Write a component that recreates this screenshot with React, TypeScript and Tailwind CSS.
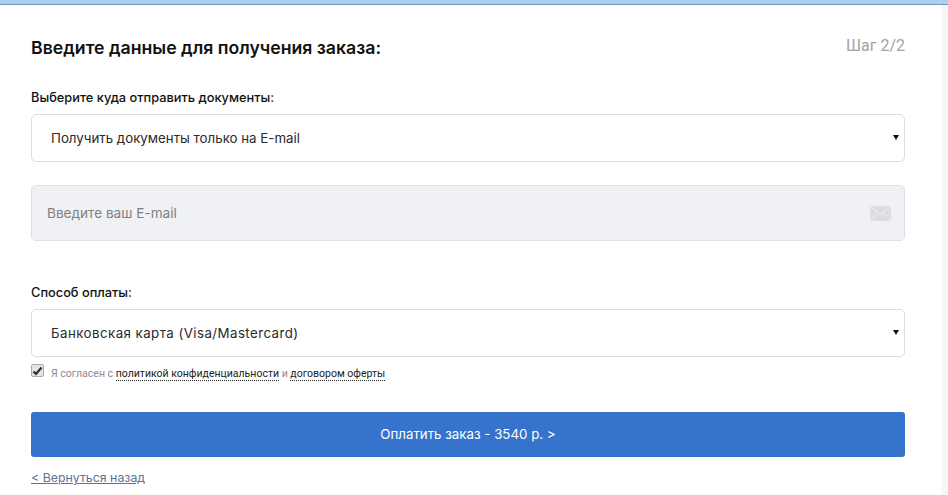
const font = "font-['Inter','Noto_Sans',sans-serif]";

function SelectBox({ label, tracking }: { label: string; tracking?: string }) {
  return (
    <div className="h-[48px] flex items-center justify-between pl-[19px] pr-[5px] bg-white border border-[#dcdcdc] rounded-[5px]">
      <span className={`pt-[1px] text-[13.3px] text-[#2a2a2a] ${tracking ?? ""}`}>{label}</span>
      <svg width="6" height="5" viewBox="0 0 6 5" className="mt-[-1px]">
        <path d="M0 0H6L3 5Z" fill="#111111" />
      </svg>
    </div>
  );
}

export default function App() {
  return (
    <div className={`${font} w-[948px] h-[495px] overflow-hidden bg-white flex flex-col`}>
      <div className="h-[5px] shrink-0 bg-[#a9cff3] border-b border-[#7d96ad]" />
      <div className="flex flex-1 min-h-0">
        <div className="flex-1 pl-[31px] pr-[37px]">
          <div className="flex items-start justify-between pt-[31px]">
            <h1 className="text-[17.7px] leading-[24px] font-semibold text-[#111111]">
              Введите данные для получения заказа:
            </h1>
            <span className="text-[16px] leading-[20px] text-[#a3a3a3] font-['Roboto',sans-serif]">Шаг 2/2</span>
          </div>

          <div className="mt-[29px] mb-[7px] text-[12.8px] leading-[18px] font-medium text-[#111111]">
            Выберите куда отправить документы:
          </div>
          <SelectBox label="Получить документы только на E-mail" />

          <div className="mt-[23px] h-[56px] flex items-center justify-between pl-[15px] pr-[13px] bg-[#f0f1f5] border border-[#dfe0e3] rounded-[5px]">
            <span className="text-[13.6px] text-[#808080]">Введите ваш E-mail</span>
            <svg width="21" height="15" viewBox="0 0 21 15">
              <rect width="21" height="15" fill="#dcdde0" />
              <path d="M0 0.5L10.5 8.5L21 0.5M0 14.5L7.5 6.5M21 14.5L13.5 6.5" fill="none" stroke="#f0f1f5" strokeWidth="1" />
            </svg>
          </div>

          <div className="mt-[43px] mb-[7px] text-[12.8px] leading-[18px] font-medium text-[#111111]">Способ оплаты:</div>
          <SelectBox label="Банковская карта (Visa/Mastercard)" tracking="tracking-[0.44px]" />

          <div className="mt-[7px] flex items-start gap-[7px] h-[16px] font-['Roboto',sans-serif] text-[10.53px] leading-[16px] text-[#8c8c8c]">
            <span className="w-[13px] h-[13px] flex items-center justify-center bg-[#e4e4e4] border border-[#ababab] rounded-[2px]">
              <svg width="11" height="10" viewBox="0 0 11 10">
                <path d="M1.5 5.5L4 8L9.5 1.5" fill="none" stroke="#2f2f2f" strokeWidth="2.2" />
              </svg>
            </span>
            <span className="pt-[2px]">
              Я согласен с{" "}
              <a className="text-[#222222] border-b border-dotted border-[#222222]">политикой конфиденциальности</a>{" "}
              и <a className="text-[#222222] border-b border-dotted border-[#222222]">договором оферты</a>
            </span>
          </div>

          <button className="mt-[32px] w-full h-[45px] bg-[#3573cc] rounded-[3px] text-white text-[13.3px]">
            Оплатить заказ - 3540 р. &gt;
          </button>

          <a className="inline-block mt-[12px] text-[12.35px] leading-[18px] text-[#5b7299] underline">&lt; Вернуться назад</a>
        </div>
        <div className="w-[6px] shrink-0 bg-[#f6f6f6]" />
      </div>
    </div>
  );
}
